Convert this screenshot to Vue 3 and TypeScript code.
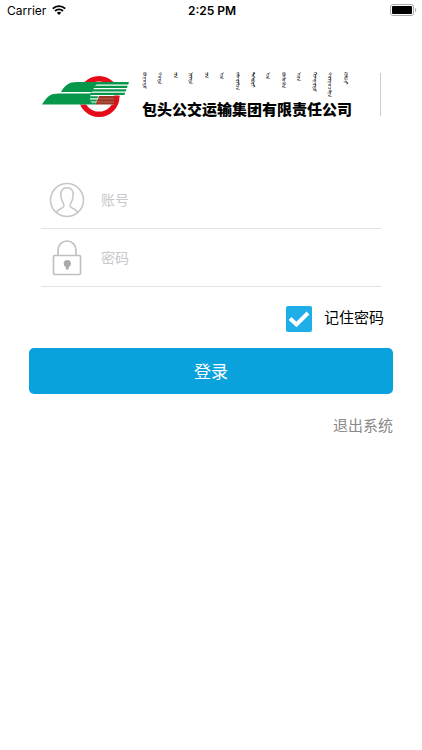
<script setup lang="ts">
import { ref } from 'vue'

const account = ref('')
const password = ref('')
const remember = ref(true)

const mongolian: string[] = [
  'ᠪᠤᠭᠤᠲᠤ', 'ᠬᠣᠲᠠ', 'ᠶᠢᠨ', 'ᠨᠡᠶᠢᠲᠡ', 'ᠶᠢᠨ', 'ᠤᠨ', 'ᠵᠠᠮᠬᠠᠷᠢᠯᠴᠠ',
  'ᠲᠡᠭᠡᠪᠦᠷᠢ', 'ᠤᠨ', 'ᠪᠦᠯᠦᠭᠦᠨ', 'ᠦᠨ', 'ᠬᠢᠵᠠᠭᠠᠷᠲᠤ', 'ᠬᠠᠷᠢᠭᠤᠴᠠᠯᠭᠠ', 'ᠺᠣᠮᠫᠠᠨᠢ',
]
</script>

<template>
  <div class="screen">
    <header class="status">
      <div class="carrier">
        <span>Carrier</span>
        <svg class="wifi" viewBox="0 0 14 10" aria-hidden="true">
          <path d="M.8 3.6a9 9 0 0 1 12.4 0M3 6a5.8 5.8 0 0 1 8 0" fill="none" stroke="#000" stroke-width="1.9" />
          <path d="M4.8 7.7a3.2 3.2 0 0 1 4.4 0L7 10z" />
        </svg>
      </div>
      <time class="time">2:25 PM</time>
      <svg class="battery" viewBox="0 0 27 12" aria-hidden="true">
        <rect x=".5" y=".5" width="23" height="11" rx="2.5" fill="#fff" stroke="#aaa" />
        <rect x="2" y="2" width="20" height="8" rx="1" />
        <path d="M25 4c1.8.6 1.8 3.4 0 4z" fill="#aaa" />
      </svg>
    </header>

    <main>
      <div class="brand">
        <svg class="logo" viewBox="0 0 88 44" aria-hidden="true">
          <circle cx="58" cy="21.5" r="17.8" fill="none" stroke="#e50b18" stroke-width="5.400" />
          <path d="M19 16C23 9 27 7 36 7H88L83 20.500H73V29.500H1C6 21 9 16 18 16z" fill="#fff" />
          <path d="M20 17C24 10 28 7 36 7H58L54 11 51 17z" fill="#07974b" />
          <path d="M1 29.500C6 21.500 9 18.500 18 18.500H50Q47.500 24 52 29.500z" fill="#07974b" />
          <path d="M57 7H88L87.200 9.500H55zM54 10.800H86.700L86 13H52zM51.500 14.300H85.400L84.600 16.500H50.500zM49.500 17.700H84.200L83.300 20H49zM49 21.200H57L56.500 23.200H49.300zM49.500 24.400H56L55.500 26.400H50zM50.500 27.500H55L54.500 29.500H52z" fill="#07974b" />
          <path d="M58 21H77.500L76 29.500H54.500z" fill="#9b3524" />
          <path d="M74 21H78.500L76.500 29.500H73z" fill="#e50b18" />
          <path d="M57 23.800H73M56 27H73" stroke="#c88474" stroke-width=".6" />
        </svg>
        <div class="names">
          <div class="mongolian" lang="mn-Mong">
            <span v-for="(word, i) in mongolian" :key="i">{{ word }}</span>
          </div>
          <h1>包头公交运输集团有限责任公司</h1>
        </div>
        <div class="divider"></div>
      </div>

      <form @submit.prevent>
        <div class="field">
          <label for="account" aria-label="账号">
            <svg viewBox="0 0 36 36" fill="none" stroke="#c8c8c8" stroke-width="1.600">
              <circle cx="18" cy="18" r="16.500" />
              <path d="M7.500 30.500C8.500 26.500 14.800 26.500 15 24 15.200 21.500 11.800 19 11.800 13 11.800 8 13.500 5.800 18 5.800S24.200 8 24.200 13C24.200 19 20.800 21.500 21 24 21.200 26.500 27.500 26.500 28.500 30.500" />
            </svg>
          </label>
          <input id="account" v-model="account" type="text" placeholder="账号" />
        </div>
        <div class="field">
          <label for="password" aria-label="密码">
            <svg viewBox="0 0 36 36" fill="none" stroke="#bfbfbf" stroke-width="1.600">
              <path d="M9 15.500V10a9 9 0 0 1 18 0v5.500" />
              <rect x="4.500" y="15.500" width="27" height="19" rx="1" />
              <circle cx="18.300" cy="23.500" r="3.600" fill="#aaa" stroke="none" />
              <path d="M16.800 25h3v4q-1.500 1.500-3 0z" fill="#aaa" stroke="none" />
            </svg>
          </label>
          <input id="password" v-model="password" type="password" placeholder="密码" />
        </div>
        <label class="remember">
          <input v-model="remember" type="checkbox" />
          <svg viewBox="0 0 26 26" aria-hidden="true">
            <rect width="26" height="26" rx="2" fill="#1eaee8" />
            <path v-if="remember" d="M4 12.500 10.500 18.500 22 7" fill="none" stroke="#fff" stroke-width="4" />
          </svg>
          <span>记住密码</span>
        </label>
        <button class="login" type="submit">登录</button>
        <a class="exit" href="#">退出系统</a>
      </form>
    </main>
  </div>
</template>

<style>
body { margin: 0; background: #fff; }
</style>

<style scoped>
.screen {
  font-family: Inter, "Noto Sans CJK SC", sans-serif;
  color: #000;
}
.status {
  display: grid;
  grid-template-columns: 1fr auto 1fr;
  align-items: center;
  height: 20px;
  padding: 0 5px 0 7px;
  font-size: 12px;
}
.carrier { display: flex; align-items: center; gap: 6px; }
.wifi { width: 14px; height: 10px; }
.time { font-weight: 600; }
.battery { width: 27px; height: 12px; justify-self: end; }
.brand {
  display: flex;
  align-items: flex-start;
  padding: 52px 41px 0;
}
.logo { width: 88px; height: 44px; margin-top: 3px; }
.names { margin-left: 13px; }
.mongolian {
  display: grid;
  grid-template-columns: repeat(14, 1fr);
  height: 28px;
  margin-right: -6px;
  font-size: 5px;
  line-height: 6px;
  color: #222;
}
.mongolian span { writing-mode: vertical-lr; white-space: nowrap; }
h1 {
  margin: 0;
  font-size: 15px;
  line-height: 20px;
  font-weight: 900;
  white-space: nowrap;
}
.divider { width: 1px; height: 43px; margin: 1px 0 0 auto; background: #ccc; }
form {
  display: flex;
  flex-direction: column;
  padding: 51px 29px 0;
}
.field {
  display: flex;
  align-items: center;
  height: 57px;
  margin: 0 12px;
  padding-left: 8px;
  border-bottom: 1px solid #e2e2e2;
}
.field svg { display: block; width: 36px; height: 36px; }
.field input {
  flex: 1;
  min-width: 0;
  margin-left: 16px;
  padding: 0 0 2px;
  border: 0;
  outline: 0;
  background: transparent;
  font: 14px "Noto Sans CJK SC", sans-serif;
}
.field input::placeholder { color: #c8c8cd; opacity: 1; }
.remember {
  display: flex;
  align-items: center;
  align-self: flex-end;
  position: relative;
  margin: 18px 9px 0 0;
  gap: 12px;
  font-size: 15px;
  line-height: 26px;
}
.remember input { position: absolute; left: 0; width: 26px; height: 26px; margin: 0; opacity: 0; }
.remember svg { width: 26px; height: 26px; }
.remember span { padding-bottom: 2px; }
.login {
  height: 46px;
  margin-top: 15px;
  padding-bottom: 3px;
  border: 0;
  border-radius: 5px;
  background: #0aa2dd;
  color: #fff;
  font: 17px "Noto Sans CJK SC", sans-serif;
}
.exit {
  align-self: flex-end;
  margin-top: 20px;
  color: #888;
  font-size: 15px;
  line-height: 24px;
  text-decoration: none;
}
</style>
